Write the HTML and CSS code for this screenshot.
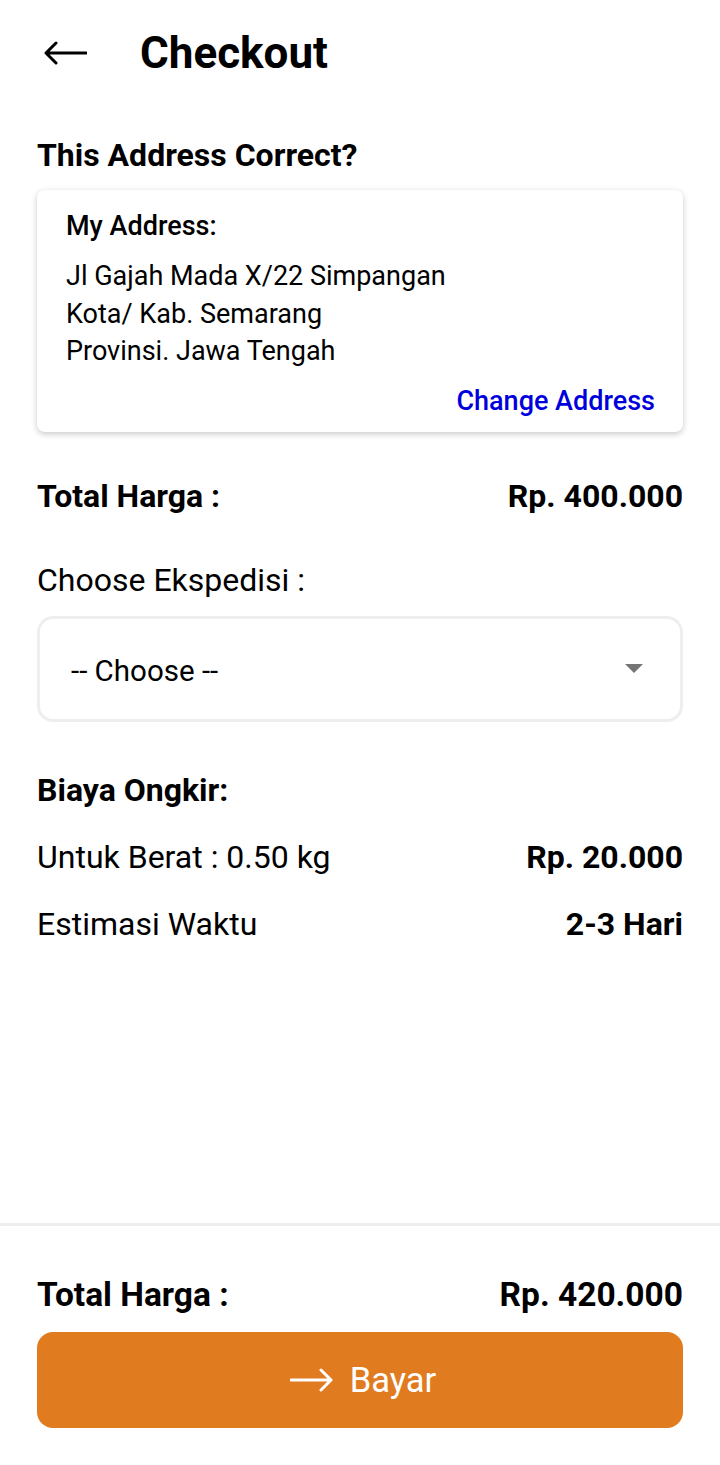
FILE: index.html
```html
<!DOCTYPE html>
<html>
<head>
<meta charset="utf-8">
<link rel="stylesheet" href="styles.css">
</head>
<body>
<div class="page">
  <header class="header">
    <svg class="back" width="44" height="24" viewBox="0 0 44 24"><path d="M43 12H3M13 2L3 12l10 10" fill="none" stroke="#000" stroke-width="3" stroke-linecap="round" stroke-linejoin="round"/></svg>
    <h1 class="title">Checkout</h1>
  </header>
  <main class="content">
    <h2 class="section-title">This Address Correct?</h2>
    <div class="card">
      <div class="card-label">My Address:</div>
      <div class="address">
        <div>Jl Gajah Mada X/22 Simpangan</div>
        <div>Kota/ Kab. Semarang</div>
        <div>Provinsi. Jawa Tengah</div>
      </div>
      <div class="change">Change Address</div>
    </div>
    <div class="row total-row">
      <span class="bold">Total Harga :</span>
      <span class="bold">Rp. 400.000</span>
    </div>
    <div class="label">Choose Ekspedisi :</div>
    <div class="select">
      <span>-- Choose --</span>
      <span class="caret"></span>
    </div>
    <div class="ongkir-title bold">Biaya Ongkir:</div>
    <div class="row info-row">
      <span>Untuk Berat : 0.50 kg</span>
      <span class="bold">Rp. 20.000</span>
    </div>
    <div class="row info-row">
      <span>Estimasi Waktu</span>
      <span class="bold">2-3 Hari</span>
    </div>
  </main>
  <footer class="footer">
    <div class="row footer-total">
      <span class="bold">Total Harga :</span>
      <span class="bold">Rp. 420.000</span>
    </div>
    <button class="pay">
      <svg width="44" height="24" viewBox="0 0 44 24"><path d="M1 12h40M31 2l10 10-10 10" fill="none" stroke="#fff" stroke-width="3" stroke-linecap="round" stroke-linejoin="round"/></svg>
      <span>Bayar</span>
    </button>
  </footer>
</div>
</body>
</html>
```
FILE: styles.css
```css
html, body {
  margin: 0;
  padding: 0;
  background: #fff;
}
body {
  font-family: Roboto, "Noto Sans", sans-serif;
  color: #000;
}
.page {
  width: 720px;
  height: 1465px;
  display: flex;
  flex-direction: column;
}
.header {
  display: flex;
  align-items: center;
  height: 106px;
  padding-left: 43px;
}
.back {
  display: block;
}
.title {
  margin: 0 0 0 53px;
  font-size: 44px;
  font-weight: 700;
  line-height: 52px;
}
.content {
  flex: 1;
  padding: 0 37px;
}
.section-title {
  margin: 30px 0 0;
  font-size: 32px;
  font-weight: 700;
  line-height: 38px;
}
.card {
  margin-top: 16px;
  background: #fff;
  border-radius: 8px;
  box-shadow: 0 2px 6px rgba(0,0,0,0.22);
  padding: 19px 28px 12px 29px;
}
.card-label {
  font-size: 27px;
  font-weight: 500;
  line-height: 34px;
}
.address {
  margin-top: 15px;
  font-size: 27px;
  line-height: 37.5px;
}
.change {
  margin-top: 11px;
  text-align: right;
  color: #0000dd;
  font-size: 27px;
  font-weight: 500;
  line-height: 38px;
}
.row {
  display: flex;
  justify-content: space-between;
  align-items: center;
}
.bold {
  font-weight: 700;
}
.total-row {
  margin-top: 45px;
  font-size: 32px;
  line-height: 38px;
}
.label {
  margin-top: 46px;
  font-size: 32px;
  line-height: 38px;
}
.select {
  margin-top: 17px;
  height: 106px;
  box-sizing: border-box;
  border: 3px solid #eeeeee;
  border-radius: 16px;
  display: flex;
  align-items: center;
  justify-content: space-between;
  padding: 4px 37px 0 31px;
  font-size: 29.5px;
}
.caret {
  width: 0;
  height: 0;
  margin-top: -4px;
  border-left: 9px solid transparent;
  border-right: 9px solid transparent;
  border-top: 9px solid #757575;
}
.ongkir-title {
  margin-top: 49px;
  font-size: 32px;
  line-height: 38px;
}
.info-row {
  margin-top: 29px;
  font-size: 32px;
  line-height: 38px;
}
.footer {
  border-top: 3px solid #eeeeee;
  padding: 49px 37px 37px;
}
.footer-total {
  font-size: 33.5px;
  line-height: 40px;
}
.pay {
  margin-top: 17px;
  width: 100%;
  height: 96px;
  border: none;
  border-radius: 16px;
  background: #e07b20;
  color: #fff;
  font-family: Roboto, "Noto Sans", sans-serif;
  font-size: 34.5px;
  display: flex;
  align-items: center;
  justify-content: center;
  gap: 16px;
  padding: 0 0 0 6px;
}
.pay svg {
  display: block;
}
```
